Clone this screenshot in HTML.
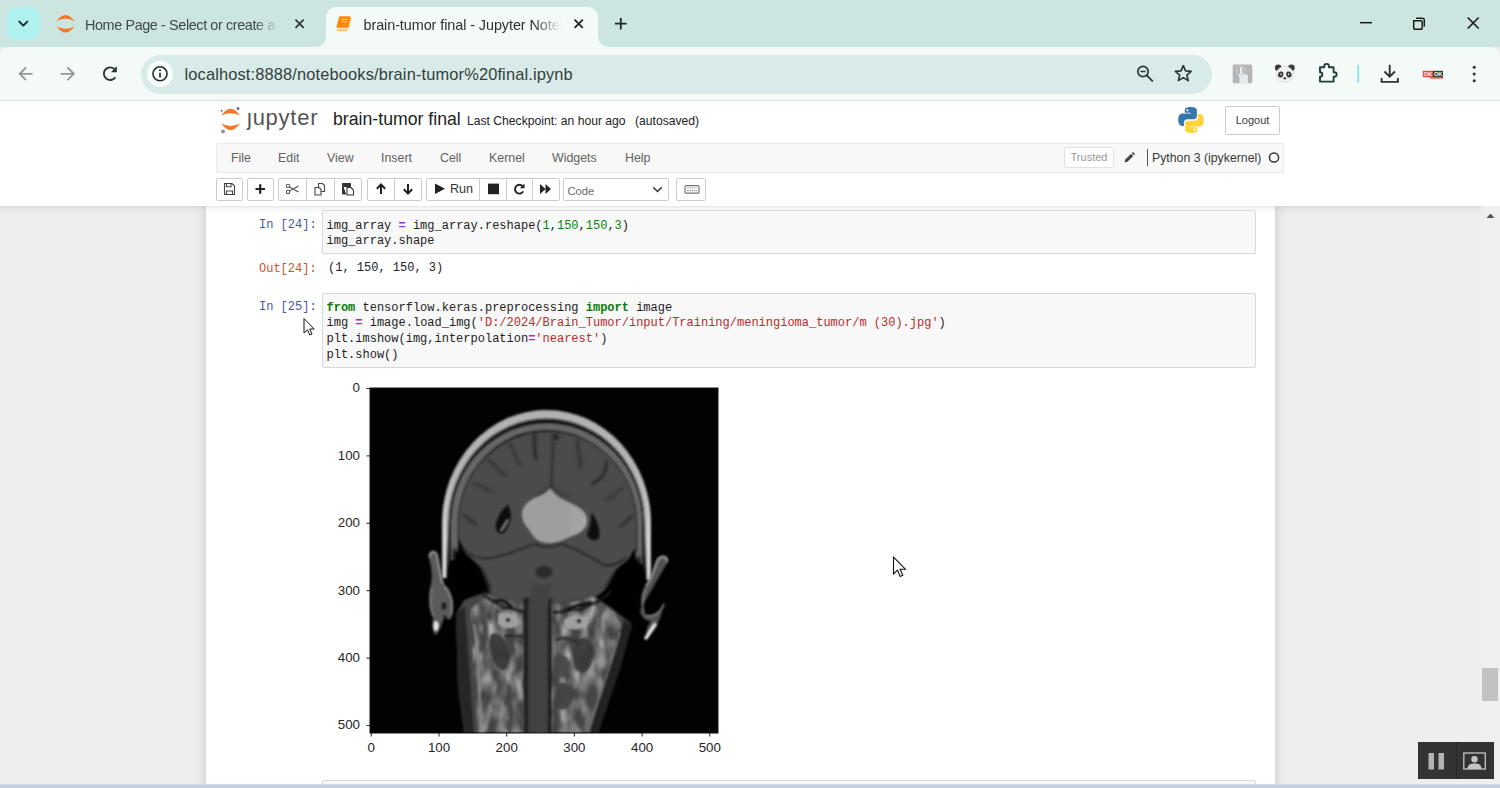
<!DOCTYPE html>
<html>
<head>
<meta charset="utf-8">
<title>brain-tumor final - Jupyter Notebook</title>
<style>
*{box-sizing:border-box;margin:0;padding:0}
html,body{width:1500px;height:788px;overflow:hidden;background:#eeeeee;font-family:"Liberation Sans",sans-serif;}
.abs{position:absolute}
#root{position:relative;width:1500px;height:788px;overflow:hidden}
/* ---------- browser chrome ---------- */
#tabbar{left:0;top:0;width:1500px;height:47px;background:#cde5e1}
#tabdrop{left:7px;top:7px;width:33px;height:33px;border-radius:10px;background:#aef1ef}
#tab1txt{left:85px;top:16.500px;font-size:14.4px;letter-spacing:-0.39px;color:#3c4a49;white-space:nowrap;width:193px;overflow:hidden;-webkit-mask-image:linear-gradient(90deg,#000 170px,transparent 193px);mask-image:linear-gradient(90deg,#000 170px,transparent 193px)}
#tab2{left:326px;top:7.300px;width:272px;height:40.700px;background:#f3faf7;border-radius:10px 10px 0 0}
#tab2txt{left:363.500px;top:16.500px;font-size:14.4px;letter-spacing:-0.07px;color:#2b3332;white-space:nowrap;width:197px;overflow:hidden;-webkit-mask-image:linear-gradient(90deg,#000 170px,transparent 197px);mask-image:linear-gradient(90deg,#000 170px,transparent 197px)}
#toolbar{left:0;top:47px;width:1500px;height:53px;background:#f3faf7;border-radius:10px 10px 0 0}
#omni{left:141px;top:54.500px;width:1071px;height:39px;border-radius:19.500px;background:#d9ebe8}
#info{left:147px;top:61px;width:26px;height:26px;border-radius:13px;background:#f7fcfa}
#url{left:184.500px;top:64.500px;font-size:16.4px;color:#333f3e;white-space:nowrap;letter-spacing:0.15px}
#chromeline{left:0;top:100px;width:1500px;height:1px;background:#d6e5e0}
/* ---------- jupyter header ---------- */
#hdr{left:0;top:101px;width:1500px;height:105px;background:#fff}
#hdrshadow{left:0;top:205.500px;width:1500px;height:9px;background:linear-gradient(rgba(0,0,0,.085),rgba(0,0,0,.04) 30%,rgba(0,0,0,.012) 65%,rgba(0,0,0,0))}
#nbname{left:333px;top:109px;font-size:17.7px;color:#222;white-space:nowrap}
#chk{left:467px;top:114px;font-size:12.15px;color:#222;white-space:nowrap}
#auto{left:635px;top:114px;font-size:12.15px;color:#222;white-space:nowrap}
#logout{left:1225px;top:106px;width:55px;height:29px;border:1px solid #ccc;border-radius:2px;background:#fff;font-size:11px;color:#3a3a3a;text-align:center;line-height:27px}
#menubar{left:216px;top:143px;width:1068px;height:30px;background:#f8f8f8;border:1px solid #eaeaea;border-radius:2px}
.mi{position:absolute;top:151px;font-size:12.4px;color:#626262;white-space:nowrap}
#trusted{left:1064px;top:147px;width:50px;height:21px;border:1px solid #e2e2e2;border-radius:2px;background:#fff;font-size:11px;color:#999;text-align:center;line-height:19px}
#kdiv{left:1147px;top:149px;width:1px;height:17px;background:#555}
#kname{left:1152px;top:150.500px;font-size:12.3px;color:#3a3a3a;white-space:nowrap}
.tb{position:absolute;top:178px;height:23px;border:1px solid #ccc;background:#fff;border-radius:2px}
.tbsep{position:absolute;top:178px;width:1px;height:22px;background:#ccc}
/* ---------- notebook ---------- */
#nbbg{left:0;top:206px;width:1500px;height:582px;background:#eeeeee;overflow:hidden}
#nb{left:206px;top:0px;width:1069px;height:600px;background:#fff;box-shadow:0 0 10px 1px rgba(87,87,87,.25)}
.inp{position:absolute;left:322px;width:934px;background:#f8f8f8;border:1px solid #d8d8d8;border-radius:2px}
.code{position:absolute;left:326.5px;font-family:"Liberation Mono",monospace;font-size:12px;line-height:15.750px;color:#222;white-space:pre}
.prompt{position:absolute;left:259px;font-family:"Liberation Mono",monospace;font-size:12px;line-height:16px;white-space:pre}
.pin{color:#4a55a8}
.pout{color:#d0522a}
.k{color:#0a7d0a;font-weight:bold}
.o{color:#a02be0;font-weight:bold}
.n{color:#0a820a}
.s{color:#bb2a2a}
.tick{position:absolute;font-size:13.3px;color:#262626;white-space:nowrap;line-height:14px}
.ty{width:40px;text-align:right;left:320px}
.tx{width:40px;text-align:center}
#scroll{left:1481px;top:206px;width:19px;height:582px;background:#efefef}
#thumb{left:1482px;top:668px;width:16px;height:33px;background:#c2c2c2}
#bottomband{left:0;top:784px;width:1500px;height:4px;background:linear-gradient(#dfe5ea,#bccada 50%,#c8d3df)}
#rec{left:1418px;top:742px;width:76px;height:37px;background:#333}
</style>
</head>
<body>
<div id="root">

<!-- ======= BROWSER CHROME ======= -->
<div id="tabbar" class="abs"></div>
<div id="tabdrop" class="abs"></div>
<div id="tab1txt" class="abs">Home Page - Select or create a</div>
<div id="tab2" class="abs"></div>
<div id="tab2txt" class="abs">brain-tumor final - Jupyter Notebook</div>
<div id="toolbar" class="abs"></div>
<div id="omni" class="abs"></div>
<div id="info" class="abs"></div>
<div id="url" class="abs">localhost:8888/notebooks/brain-tumor%20final.ipynb</div>
<div id="chromeline" class="abs"></div>

<svg class="abs" style="left:0;top:0" width="1500" height="100" viewBox="0 0 1500 100">
 <!-- active tab flares -->
 <path d="M316 47h10v-10a10 10 0 0 1 -10 10z" fill="#f3faf7"/>
 <path d="M608 47h-10v-10a10 10 0 0 0 10 10z" fill="#f3faf7"/>
 <!-- tab dropdown chevron -->
 <path d="M19.300 21.600l4 4 4-4" stroke="#1d2b2a" stroke-width="2" fill="none" stroke-linecap="round" stroke-linejoin="round"/>
 <!-- jupyter favicon -->
 <path d="M56.600 21.200Q65.500 8.600 74.400 21.200Q65.500 16 56.600 21.200z" fill="#f37726"/>
 <path d="M56.600 26.200Q65.500 38.800 74.400 26.200Q65.500 31.400 56.600 26.200z" fill="#f37726"/>
 <!-- tab1 close -->
 <path d="M295.500 19.700l8.200 8.200M303.700 19.700l-8.200 8.200" stroke="#2b3635" stroke-width="1.700" fill="none"/>
 <!-- book favicon -->
 <g>
  <path d="M349.600 17.200l1.600 0.400a0.800 0.800 0 0 1 0.500 1l-2.400 9.700a1.200 1.200 0 0 1 -0.900 0.900l-1.200 0.900z" fill="#ffd595"/>
  <path d="M340.300 16.300h9.300a1 1 0 0 1 1 1.200l-2.200 9.300a1.200 1.200 0 0 1 -1.200 0.900h-9.700a1 1 0 0 1 -1-1.200l2.500-9.300a1.200 1.200 0 0 1 1.300-0.900z" fill="#ff890c"/>
  <path d="M336.900 28.200h11l-0.700 2h-9.700a1 1 0 0 1 -0.600-2z" fill="#ffdba4"/>
  <path d="M337 30.500h10.200" stroke="#ffab52" stroke-width="0.900" fill="none"/>
  <path d="M341.500 19.500h6.200M341.300 21.700h5.600" stroke="#ffd9a8" stroke-width="0.900"/>
 </g>
 <!-- tab2 close -->
 <path d="M574.600 19.700l8.200 8.200M582.800 19.700l-8.200 8.200" stroke="#1d2726" stroke-width="1.800" fill="none"/>
 <!-- new tab plus -->
 <path d="M615 23.700h11.600M620.800 17.900v11.600" stroke="#1d2b2a" stroke-width="1.800" fill="none"/>
 <!-- window controls -->
 <path d="M1360 22.700h12" stroke="#1a1a1a" stroke-width="1.500"/>
 <path d="M1413.700 20.700h7.300a1.200 1.200 0 0 1 1.200 1.200v6.100a1.200 1.200 0 0 1 -1.200 1.200h-6.100a1.200 1.200 0 0 1 -1.200-1.200z" fill="none" stroke="#1a1a1a" stroke-width="1.500"/>
 <path d="M1416 18.200h6.300a2 2 0 0 1 2 2v6.300" fill="none" stroke="#1a1a1a" stroke-width="1.500"/>
 <path d="M1467.700 17.500l11 11M1478.700 17.500l-11 11" stroke="#1a1a1a" stroke-width="1.700"/>
 <!-- back / forward -->
 <path d="M32.500 73.800h-12M26 67.500l-6.300 6.300 6.300 6.300" stroke="#8e9998" stroke-width="1.800" fill="none"/>
 <path d="M60.800 73.800h12M67.500 67.500l6.300 6.300-6.300 6.300" stroke="#8e9998" stroke-width="1.800" fill="none"/>
 <!-- reload -->
 <path d="M115.400 77.200a6.300 6.300 0 1 1 -0.400-7.500" stroke="#2a3635" stroke-width="1.900" fill="none"/>
 <path d="M116.900 66.300v6h-6z" fill="#2a3635"/>
 <!-- info icon -->
 <circle cx="160" cy="73.800" r="7" fill="none" stroke="#222c2b" stroke-width="1.600"/>
 <path d="M160 72.800v4.600" stroke="#222c2b" stroke-width="1.700"/><circle cx="160" cy="70.300" r="1" fill="#222c2b"/>
 <!-- zoom out -->
 <circle cx="1143" cy="71.500" r="5.200" fill="none" stroke="#2a3635" stroke-width="1.700"/>
 <path d="M1146.800 75.300l6 6" stroke="#2a3635" stroke-width="1.900"/><path d="M1140.400 71.500h5.200" stroke="#2a3635" stroke-width="1.500"/>
 <!-- star -->
 <path d="M1183.300 65.700l2.300 5.200 5.600 0.500-4.300 3.700 1.300 5.500-4.900-3-4.900 3 1.300-5.500-4.300-3.700 5.600-0.500z" fill="none" stroke="#2a3635" stroke-width="1.700" stroke-linejoin="round"/>
 <!-- grey extension -->
 <rect x="1232.700" y="64.400" width="19.600" height="18.800" rx="1.500" fill="#b4b6b6"/>
 <path d="M1239.500 83.200v-6.500l-1.500-2v-1.500l2 1v-6a1 1 0 0 1 2.200 0v5l4.500 1.200a1.500 1.500 0 0 1 1.200 1.600v7.200z" fill="#e6ecec"/>
 <circle cx="1241" cy="70.500" r="4.500" fill="none" stroke="#c9cccc" stroke-width="1.200"/>
 <!-- panda -->
 <g>
  <circle cx="1278.200" cy="67.700" r="3.300" fill="#3b3b3b"/><circle cx="1291.400" cy="67.700" r="3.300" fill="#3b3b3b"/>
  <ellipse cx="1284.800" cy="74.200" rx="8.600" ry="7.800" fill="#f3f3f3" stroke="#c9cfce" stroke-width="0.600"/>
  <ellipse cx="1280.700" cy="74.500" rx="2.600" ry="3.100" fill="#3b3b3b" transform="rotate(20 1280.700 74.500)"/>
  <ellipse cx="1288.900" cy="74.500" rx="2.600" ry="3.100" fill="#3b3b3b" transform="rotate(-20 1288.900 74.500)"/>
  <circle cx="1281" cy="74.200" r="0.800" fill="#fff"/><circle cx="1288.600" cy="74.200" r="0.800" fill="#fff"/>
  <ellipse cx="1284.800" cy="78.300" rx="1.600" ry="1.100" fill="#3b3b3b"/>
 </g>
 <!-- puzzle -->
 <path d="M1320 67.200h4.300v-1a2.300 2.300 0 0 1 4.600 0v1h4.700v5h0.800a2.200 2.200 0 0 1 0 4.400h-0.800v5h-13.600v-4.800a2.300 2.300 0 0 0 0-4.600z" fill="none" stroke="#1f3f3b" stroke-width="1.900" stroke-linejoin="round"/>
 <!-- cyan divider -->
 <path d="M1358.200 65.200v17.200" stroke="#86e3e3" stroke-width="1.800"/>
 <!-- download -->
 <path d="M1389.700 64.700v11.500M1384.500 71.500l5.200 5.200 5.200-5.200" stroke="#2a3635" stroke-width="1.900" fill="none"/>
 <path d="M1381.600 78v3.900h16.300v-3.900" stroke="#2a3635" stroke-width="1.900" fill="none"/>
 <!-- red OK badge -->
 <rect x="1422.800" y="70.800" width="10.200" height="6.400" fill="#ea4335"/><rect x="1433" y="70.800" width="10" height="6.400" fill="#3a3a3a"/>
 <rect x="1430" y="77.200" width="13" height="1.400" fill="#ea4335"/>
 <text x="1423.800" y="76.300" font-family="Liberation Sans, sans-serif" font-size="5.600" font-weight="bold" fill="#fff">OK</text>
 <text x="1434" y="76.300" font-family="Liberation Sans, sans-serif" font-size="5.600" font-weight="bold" fill="#fff">OK</text>
 <!-- menu dots -->
 <circle cx="1474.200" cy="67.200" r="1.500" fill="#2a3635"/><circle cx="1474.200" cy="74" r="1.500" fill="#2a3635"/><circle cx="1474.200" cy="80.700" r="1.500" fill="#2a3635"/>
</svg>


<!-- ======= JUPYTER HEADER ======= -->
<div id="hdr" class="abs"></div>

<svg class="abs" style="left:216px;top:104px" width="108" height="34" viewBox="216 104 108 34">
 <path d="M221.200 115.400Q230.600 102.200 240 115.400Q230.600 111 221.200 115.400z" fill="#f37726"/>
 <path d="M221.200 123.200Q230.600 137 240 123.200Q230.600 129 221.200 123.200z" fill="#f37726"/>
 <circle cx="238" cy="108.600" r="1.500" fill="#6f7070"/>
 <circle cx="221.600" cy="110.800" r="1" fill="#6a6a72"/>
 <circle cx="223" cy="131.400" r="1.900" fill="#8e8e8e"/>
 <text x="247" y="124.800" font-family="Liberation Sans, sans-serif" font-size="22" fill="#555" textLength="70.500" lengthAdjust="spacing">jupyter</text>
 <rect x="246" y="105" width="7" height="7.500" fill="#fff"/>
</svg>
<div id="nbname" class="abs">brain-tumor final</div>
<div id="chk" class="abs">Last Checkpoint: an hour ago</div>
<div id="auto" class="abs">(autosaved)</div>

<svg class="abs" style="left:1177px;top:106px" width="28" height="28" viewBox="0 0 28 28">
 <path d="M13.800 1c-6.400 0-6 2.800-6 2.800v2.900h6.100v0.900H5.400S1.200 7.100 1.200 13.600s3.600 6.300 3.600 6.300h2.100v-3s-0.100-3.600 3.500-3.600h6.100s3.400 0.100 3.400-3.300V4.500S20.400 1 13.800 1z" fill="#3776ab"/>
 <circle cx="10.400" cy="4.300" r="1.100" fill="#fff"/>
 <path d="M14.200 27c6.400 0 6-2.800 6-2.800v-2.900h-6.100v-0.900h8.500s4.200 0.500 4.200-6s-3.600-6.300-3.600-6.300h-2.100v3s0.100 3.600-3.500 3.600H11.500s-3.400-0.100-3.400 3.300v5.500S7.600 27 14.200 27z" fill="#ffd43b"/>
 <circle cx="17.600" cy="23.700" r="1.100" fill="#fff"/>
</svg>
<div id="logout" class="abs">Logout</div>
<div id="menubar" class="abs"></div>
<div class="mi" style="left:231px">File</div>
<div class="mi" style="left:278px">Edit</div>
<div class="mi" style="left:327px">View</div>
<div class="mi" style="left:381px">Insert</div>
<div class="mi" style="left:440px">Cell</div>
<div class="mi" style="left:489px">Kernel</div>
<div class="mi" style="left:552px">Widgets</div>
<div class="mi" style="left:625px">Help</div>
<div id="trusted" class="abs">Trusted</div>
<div id="kdiv" class="abs"></div>
<div id="kname" class="abs">Python 3 (ipykernel)</div>

<!-- toolbar buttons -->
<div class="tb" style="left:216px;width:27px"></div>
<div class="tb" style="left:247px;width:27px"></div>
<div class="tb" style="left:278px;width:84px"></div><div class="tbsep" style="left:306px"></div><div class="tbsep" style="left:334px"></div>
<div class="tb" style="left:367px;width:55px"></div><div class="tbsep" style="left:394px"></div>
<div class="tb" style="left:426px;width:134px"></div><div class="tbsep" style="left:479px"></div><div class="tbsep" style="left:506px"></div><div class="tbsep" style="left:532px"></div>
<div class="tb" style="left:563px;width:106px"></div>
<div class="tb" style="left:676px;width:30px"></div>
<div class="abs" style="left:450px;top:182px;font-size:12.6px;color:#333">Run</div>
<div class="abs" style="left:567.500px;top:184.500px;font-size:11.2px;color:#6a6a6a">Code</div>
<svg class="abs" style="left:210px;top:172px" width="510" height="36" viewBox="210 172 510 36">
 <!-- save (floppy) -->
 <g fill="none" stroke="#444" stroke-width="1.1"><path d="M224.5 183.5h7.5l2.5 2.5v8.500h-10z"/><path d="M226.5 183.500v3.200h4.500v-3.200"/><path d="M226.500 194.500v-3.500h6v3.500"/></g>
 <!-- plus -->
 <path d="M255.5 189h9.500M260.200 184.300v9.500" stroke="#222" stroke-width="2.200" fill="none"/>
 <!-- scissors -->
 <g fill="none" stroke="#555" stroke-width="1.100"><circle cx="288" cy="186" r="1.700"/><circle cx="288" cy="192" r="1.700"/><path d="M289.500 187l9 5M289.500 191l9-5"/></g>
 <!-- copy -->
 <g fill="#fff" stroke="#444" stroke-width="1.100"><path d="M318.500 183.500h4l2 2v6h-6z"/><path d="M315 187.500h4l2 2v5.500h-6z"/></g>
 <!-- paste -->
 <g><path d="M342.500 183.500h8v3h-8zM342.500 183.500v10.500h3.500" fill="#333" stroke="#333" stroke-width="1"/><path d="M347 187.500h4l2.500 2.500v5h-6.500z" fill="#fff" stroke="#333" stroke-width="1.100"/></g>
 <!-- arrow up -->
 <path d="M381 194v-9M376.800 188.800l4.200-4.300 4.200 4.300" stroke="#222" stroke-width="2" fill="none"/>
 <!-- arrow down -->
 <path d="M408 184v9M403.800 189.200l4.200 4.300 4.200-4.300" stroke="#222" stroke-width="2" fill="none"/>
 <!-- play -->
 <path d="M435 183.600l10 5.200-10 5.200z" fill="#222"/>
 <!-- stop -->
 <rect x="488" y="183.600" width="11" height="10.600" fill="#222"/>
 <!-- reload -->
 <path d="M523.200 191.400a4.400 4.400 0 1 1 -0.600-5.200" stroke="#222" stroke-width="1.900" fill="none"/><path d="M524.500 183.600v4.700h-4.700z" fill="#222"/>
 <!-- fast forward -->
 <path d="M540 184l5.500 5-5.500 5zM545.500 184l5.500 5-5.500 5z" fill="#222"/>
 <!-- chevron -->
 <path d="M653.200 187.300l4.300 4.200 4.300-4.200" stroke="#333" stroke-width="1.500" fill="none"/>
 <!-- keyboard -->
 <g><rect x="685" y="185.600" width="14" height="7.600" rx="1" fill="#fff" stroke="#777" stroke-width="1.200"/><path d="M687 188h10M687 190.600h10" stroke="#999" stroke-width="1.200" stroke-dasharray="1.500 0.800"/></g>
</svg>
<!-- pencil + kernel circle -->
<svg class="abs" style="left:1120px;top:148px" width="170" height="20" viewBox="1120 148 170 20">
 <path d="M1124.500 162.500l0.800-3 5.800-5.800 2.200 2.200-5.800 5.800z" fill="#444"/><path d="M1131.800 153l1.100-1.100 2.200 2.200-1.100 1.100z" fill="#444"/>
 <circle cx="1274" cy="157.500" r="4.600" fill="none" stroke="#333" stroke-width="1.500"/>
</svg>


<!-- ======= NOTEBOOK ======= -->
<div id="nbbg" class="abs"><div id="nb" class="abs"></div></div>
<div id="hdrshadow" class="abs"></div>

<div class="inp" style="top:210px;height:44px"></div>
<div class="prompt pin" style="top:217px">In [24]:</div>
<div class="code" style="top:218.700px">img_array <span class="o">=</span> img_array.reshape(<span class="n">1</span>,<span class="n">150</span>,<span class="n">150</span>,<span class="n">3</span>)
img_array.shape</div>
<div class="prompt pout" style="top:260.500px">Out[24]:</div>
<div class="code" style="top:260.500px;left:328px">(1, 150, 150, 3)</div>

<div class="inp" style="top:293px;height:75px"></div>
<div class="prompt pin" style="top:299px">In [25]:</div>
<div class="code" style="top:300.700px"><span class="k">from</span> tensorflow.keras.preprocessing <span class="k">import</span> image
img <span class="o">=</span> image.load_img(<span class="s">'D:/2024/Brain_Tumor/input/Training/meningioma_tumor/m (30).jpg'</span>)
plt.imshow(img,interpolation<span class="o">=</span><span class="s">'nearest'</span>)
plt.show()</div>

<!--PLOT-START--><!-- plot -->
<div class="tick ty" style="top:381.3px">0</div>
<div class="tick ty" style="top:448.7px">100</div>
<div class="tick ty" style="top:516.1px">200</div>
<div class="tick ty" style="top:583.5px">300</div>
<div class="tick ty" style="top:650.9px">400</div>
<div class="tick ty" style="top:718.3px">500</div>
<div class="tick tx" style="left:351.3px;top:740.500px">0</div>
<div class="tick tx" style="left:419.0px;top:740.500px">100</div>
<div class="tick tx" style="left:486.7px;top:740.500px">200</div>
<div class="tick tx" style="left:554.4px;top:740.500px">300</div>
<div class="tick tx" style="left:622.1px;top:740.500px">400</div>
<div class="tick tx" style="left:689.8px;top:740.500px">500</div>
<svg class="abs" style="left:360px;top:380px" width="366" height="362" viewBox="-10 -8 366 362">
 <defs>
  <filter id="b1" x="-10%" y="-10%" width="120%" height="120%"><feGaussianBlur stdDeviation="0.9"/></filter>
  <filter id="b2" x="-20%" y="-20%" width="140%" height="140%"><feGaussianBlur stdDeviation="2"/></filter>
  <filter id="b4" x="-20%" y="-20%" width="140%" height="140%"><feGaussianBlur stdDeviation="1.700"/></filter>
  <filter id="b3" x="-20%" y="-20%" width="140%" height="140%"><feGaussianBlur stdDeviation="1.300"/></filter>
  <filter id="tex" x="0" y="0" width="100%" height="100%">
   <feTurbulence type="fractalNoise" baseFrequency="0.110 0.050" numOctaves="2" seed="7" result="n"/>
   <feColorMatrix in="n" type="matrix" values="0 0 0 0 0.540  0 0 0 0 0.540  0 0 0 0 0.540  1.350 1.350 0 0 -1.080" result="m"/>
   <feComposite in="m" in2="SourceGraphic" operator="in"/>
   <feGaussianBlur stdDeviation="1.100"/>
  </filter>
  <linearGradient id="sg" gradientUnits="userSpaceOnUse" x1="0" y1="80" x2="0" y2="150"><stop offset="0" stop-color="#dcdcdc" stop-opacity="0"/><stop offset="1" stop-color="#dcdcdc" stop-opacity="1"/></linearGradient>
  <clipPath id="pc"><rect x="0" y="0" width="348" height="345"/></clipPath>
 </defs>
 <!-- ticks -->
 <g stroke="#222" stroke-width="1">
  <path d="M-3.500 0.500h3.500M-3.500 67.900h3.500M-3.500 135.300h3.500M-3.500 202.700h3.500M-3.500 270.100h3.500M-3.500 337.500h3.500"/>
  <path d="M1.300 345v3.500M69 345v3.500M136.700 345v3.500M204.400 345v3.500M272.100 345v3.500M339.800 345v3.500"/>
 </g>
 <rect x="0" y="0" width="348" height="345" fill="#020202"/>
 <g clip-path="url(#pc)">
 <g filter="url(#b1)">
  <!-- faint shoulders haze -->
  
  <!-- scalp fat ring -->
  <path d="M72 190V135A104.500 113 0 0 1 281 135V192L276.500 192L274.500 135A98 104.500 0 0 0 78.500 135L76.500 190z" fill="#b2b2b2"/>
  <path d="M74.600 190V135A101.900 109.900 0 0 1 112 50" fill="none" stroke="url(#sg)" stroke-width="2.600"/>
  <path d="M278.600 192V135A101.900 109.900 0 0 0 241 50" fill="none" stroke="url(#sg)" stroke-width="2.600"/>
  <!-- inner ring -->
  <path d="M84.500 172V135A92.250 96.500 0 0 1 269 135V176" fill="none" stroke="#666" stroke-width="7"/>
  <!-- dark line between rings -->
  <path d="M79.800 178V135A96.800 102.600 0 0 1 273.400 135V182" fill="none" stroke="#141414" stroke-width="2"/>
  <!-- brain + cerebellum -->
  <path d="M88.500 150V135A89 91.500 0 0 1 266.500 135V158L258 172L246 182L240 198L222 212L196 220L152 220L126 212L112 198L110 180L96 166z" fill="#4b4b4b"/>
  <!-- thin dark line between ring and brain -->
  <path d="M88.300 160V135A89.200 91.700 0 0 1 266.700 135V164" fill="none" stroke="#262626" stroke-width="1.300"/>
 </g>
 <!-- sulci -->
 <g filter="url(#b4)" fill="none" stroke="#2a2a2a" stroke-width="3.600" stroke-linecap="round">
  <path d="M183 46C185 60 180 80 182 98" stroke="#3a3a3a" stroke-width="2"/>
  <path d="M164 46C166 56 163 62 166 70"/>
  <path d="M140 56C146 64 144 70 150 76" stroke="#383838"/>
  <path d="M118 72C126 76 128 84 136 88" stroke="#383838"/>
  <path d="M104 96C112 96 116 102 122 104" stroke="#3a3a3a"/>
  <path d="M208 52C206 62 212 70 210 80" stroke="#353535"/>
  <path d="M236 74C238 84 230 92 222 96" stroke="#262626" stroke-width="2.600"/>
  <path d="M252 100C246 104 244 110 236 112" stroke="#3a3a3a"/>
  <path d="M94 128C100 130 102 134 106 136" stroke="#333"/>
  <path d="M262 128C256 132 256 136 250 138" stroke="#333"/>
  <path d="M180 98C176 104 172 106 168 108" stroke="#353535" stroke-width="1.800"/>
  <path d="M182 98C186 104 192 106 198 108" stroke="#353535" stroke-width="1.800"/>
  <ellipse cx="186" cy="49" rx="3" ry="2.500" fill="#1c1c1c" stroke="none"/>
 </g>
 <g filter="url(#b1)" fill="none" stroke-linecap="round">
  <!-- tentorium -->
  <path d="M92 160C104 172 116 172 130 168C146 164 156 158 166 156C172 160 180 160 192 156C204 160 220 168 232 176C240 180 248 176 256 170" stroke="#242424" stroke-width="1.600"/>
  <path d="M183 47C184.500 62 180.500 82 181.500 99" stroke="#303030" stroke-width="1.300"/>
 </g>
 <!-- mastoid dark regions -->
 <g filter="url(#b2)">
  <path d="M83 160L96 168L112 182L120 200L112 222L92 224L84 200z" fill="#060606"/>
  <path d="M270 168L256 176L244 186L236 200L244 224L262 228L272 200z" fill="#060606"/>
 </g>
 <!-- tumor -->
 <g filter="url(#b1)">
  <path d="M180 100C177 107 164 108 156 116C149 124 152 134 158 140C162 146 164 152 172 154C182 157 192 153 200 149C210 146 219 140 217 130C215 120 204 117 194 112C186 108 183 104 180 100z" fill="#9e9e9e"/>
  <path d="M200 118C210 122 217 128 216 136C214 142 206 146 198 148C204 140 204 128 200 118z" fill="#a4a4a4"/>
  <!-- ventricles -->
  <path d="M138 117C142 124 142 136 134 145C128 147 125 142 126 136C128 128 132 121 138 117z" fill="#0c0c0c"/>
  <path d="M138 132L131 143" stroke="#8a8a8a" stroke-width="1.600" fill="none"/>
  <path d="M221 124C226 130 231 140 229 150C225 154 219 152 217 147C219 140 222 134 221 124z" fill="#0c0c0c"/>
  <!-- 4th ventricle -->
  <ellipse cx="174" cy="184" rx="8.500" ry="6" fill="#2b2b2b"/>
 </g>
 <!-- neck -->
 <g filter="url(#b1)">
  <path d="M86 226L94 212L116 204L134 212L156 214V345H94L88 300z" fill="#454545"/>
  <path d="M180 214L206 212L222 206L244 222L262 236L250 280L228 345H180z" fill="#454545"/>
  <!-- darker outer muscle bands -->
  <path d="M86 226L95 218L104 345H94L88 300z" fill="#262626"/>
  <path d="M262 236L254 232L234 290L218 345H228L250 280z" fill="#242424"/>
  <!-- dark muscle blobs inside neck -->
 </g>
 <!-- neck bright texture -->
 <g filter="url(#tex)">
  <path d="M100 222L118 206L134 212L156 216V345H108z" fill="#fff"/>
  <path d="M180 216L206 214L222 208L244 224L252 238L236 290L218 345H180z" fill="#fff"/>
 </g>
 <g filter="url(#b3)">
  <path d="M121 246C130 242 137 252 139 268C139 282 133 286 126 278C119 266 117 254 121 246z" fill="#333" opacity="0.900"/>
  <path d="M208 252C217 246 226 254 223 270C220 284 211 288 205 280C201 268 203 258 208 252z" fill="#383838" opacity="0.900"/>
  <path d="M186 296C197 292 206 298 203 312C199 324 190 324 183 316z" fill="#404040" opacity="0.850"/>
  <path d="M184 268C194 264 202 270 200 282C196 292 188 292 183 286z" fill="#464646" opacity="0.850"/>
 </g>
 <g filter="url(#b1)">
  <!-- bright streaks -->
  <path d="M104 236C110 270 108 310 112 345" stroke="#8c8c8c" stroke-width="2.200" fill="none"/>
  <path d="M250 244C240 280 228 310 218 345" stroke="#777" stroke-width="2" fill="none"/>
  <path d="M128 226C136 222 146 226 150 234C146 242 134 242 128 236z" fill="#a0a0a0"/>
  <circle cx="138" cy="232" r="2.300" fill="#111"/>
  <path d="M194 232C202 224 214 226 218 234C214 242 200 244 194 238z" fill="#a0a0a0"/>
  <circle cx="209" cy="233" r="2.300" fill="#111"/>
  <path d="M134 248H154" stroke="#2a2a2a" stroke-width="2.400"/>
  <path d="M186 252C194 248 202 252 208 254" stroke="#2a2a2a" stroke-width="2.400" fill="none"/>
  <!-- dark gap under cerebellum -->
  <path d="M112 204C120 214 128 214 134 220C142 218 148 224 156 224" stroke="#181818" stroke-width="3" fill="none" opacity="0.850"/><path d="M124 214C130 210 138 214 142 220" stroke="#101010" stroke-width="3" fill="none"/>
  <path d="M182 224C192 226 200 220 210 222C220 216 232 214 242 202" stroke="#181818" stroke-width="3" fill="none" opacity="0.850"/><path d="M196 222C204 216 214 218 222 214" stroke="#101010" stroke-width="3" fill="none"/>
  <!-- cord -->
 </g>
 <g filter="url(#b3)">
  <rect x="153.500" y="210" width="28" height="140" fill="#242424"/>
  <path d="M162 196L158.500 218V350H177.500V218L182 196z" fill="#424242"/>
 </g>
 <!-- ears -->
 <g filter="url(#b1)">
  <path d="M59 171C57 164 64 161 67 166C70 176 70 188 74 196C82 202 85 216 82 228C80 234 76 232 75 226C73 234 70 242 66 247C62 245 62 237 63 230C58 222 58 206 61 196C63 186 61 178 59 171z" fill="#5a5a5a"/>
  <path d="M60 169C59 163 65 162 67 167C69 176 70 188 73 196" stroke="#9a9a9a" stroke-width="2" fill="none"/>
  <path d="M74 198C81 206 84 216 81 227" stroke="#8a8a8a" stroke-width="1.800" fill="none"/>
  <path d="M62 200C60 210 60 220 64 228" stroke="#7a7a7a" stroke-width="1.600" fill="none"/>
  <ellipse cx="74" cy="218" rx="2.500" ry="4" fill="#151515"/>
  <ellipse cx="66" cy="238" rx="2.300" ry="4.800" fill="#ececec"/>
  <path d="M297 175C299 168 292 166 288 170C283 180 282 190 276 197C270 204 270 220 274 228C280 231 288 228 292 221C291 232 285 241 278 249C275 245 277 238 281 233C275 233 271 229 270 222z" fill="#525252"/>
  <path d="M297 174C298 168 292 167 288 171C284 180 282 190 276 198" stroke="#a0a0a0" stroke-width="2" fill="none"/>
  <path d="M274 227C282 230 290 226 294 216" stroke="#8c8c8c" stroke-width="1.800" fill="none"/>
  <path d="M276 200C272 208 272 218 274 226" stroke="#808080" stroke-width="1.600" fill="none"/>
  <path d="M285 237L276 250" stroke="#ececec" stroke-width="3.400" stroke-linecap="round" fill="none"/>
 </g>
 </g>
 <!-- axes frame -->
 <rect x="0" y="0" width="348" height="345" fill="none" stroke="#111" stroke-width="1"/>
</svg>
<!--PLOT-END-->

<div class="inp" style="top:780px;height:20px"></div>

<div id="scroll" class="abs"></div>
<div id="thumb" class="abs"></div>
<svg class="abs" style="left:1481px;top:206px" width="19" height="20"><path d="M5.500 12l4-4.500 4 4.500z" fill="#555"/></svg>
<div id="rec" class="abs"></div>
<svg class="abs" style="left:1418px;top:742px" width="76" height="37" viewBox="0 0 76 37">
 <rect x="38" y="0" width="1" height="37" fill="#262626"/>
 <rect x="10.500" y="11" width="5.500" height="16.500" fill="#b3b3b3"/><rect x="20.500" y="11" width="5.500" height="16.500" fill="#b3b3b3"/>
 <rect x="45.800" y="11" width="21.500" height="16" fill="none" stroke="#c4c4c4" stroke-width="1.300"/>
 <circle cx="56.500" cy="17.300" r="3.200" fill="#c4c4c4"/><path d="M49.500 27c0-4.500 3-5.500 7-5.500s7 1 7 5.500z" fill="#c4c4c4"/>
</svg>
<div id="bottomband" class="abs"></div>
<svg class="abs" style="left:300px;top:316px" width="20" height="24" viewBox="0 0 20 24"><path d="M4 2.500v14.500l3.500-3.200 2.300 5.200 2.200-1-2.300-5h4.500z" fill="#fff" stroke="#111" stroke-width="1"/></svg>
<svg class="abs" style="left:889px;top:554px" width="22" height="28" viewBox="0 0 22 28"><path d="M4.500 3v17l4-3.800 2.700 6.200 2.600-1.200-2.700-6h5.300z" fill="#fff" stroke="#111" stroke-width="1.100"/></svg>
</div>
</body>
</html>
